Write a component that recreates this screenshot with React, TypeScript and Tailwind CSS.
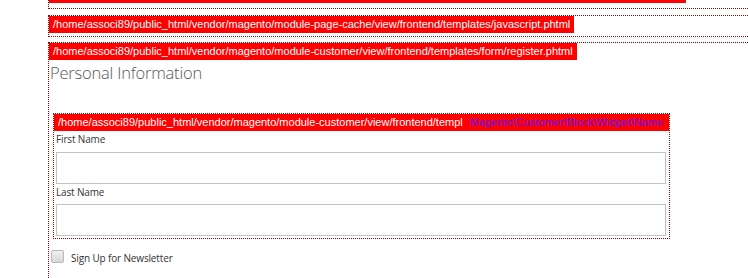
export default function App() {
  const hint = "absolute left-0 top-0 z-10 h-[17px] whitespace-nowrap bg-[#ff0000] px-[4px] text-[11px] leading-[17px] text-white [font-family:'Liberation_Sans',Arial,sans-serif]";
  return (
    <div className="h-[278px] w-[748px] overflow-hidden bg-white pl-[48px]">
      <div className="relative -mt-[15px] h-[24px] w-[720px] border border-dotted border-[#990000]">
        <div className={hint + " w-[637px] overflow-hidden"}>
          /home/associ89/public_html/vendor/magento/module-google-tag-manager/view/frontend/templates/html/google_tag_manager_default.phtml
        </div>
      </div>

      <div className="relative mt-[6px] h-[22px] w-[720px] border border-dotted border-[#990000]">
        <div className={hint}>
          /home/associ89/public_html/vendor/magento/module-page-cache/view/frontend/templates/javascript.phtml
        </div>
      </div>

      <div className="relative mt-[5px] h-[300px] w-[720px] border border-dotted border-[#990000] pt-[18px]">
        <div className={hint}>
          /home/associ89/public_html/vendor/magento/module-customer/view/frontend/templates/form/register.phtml
        </div>

        <div className="ml-[1px] h-[24px] text-[16.5px] font-light leading-[24px] tracking-[-0.2px] text-[#575757] [font-family:'Open_Sans',sans-serif]">
          Personal Information
        </div>

        <div className="relative ml-[4px] mt-[28px] w-[617px] border border-dotted border-[#990000] pb-[2px] pl-[2px] pr-[3px] pt-[18px] [font-family:'Open_Sans',sans-serif]">
          <div className="absolute left-0 top-0 z-10 flex h-[17px] w-full items-center overflow-hidden whitespace-nowrap bg-[#ff0000] pl-[4px] pr-[6px] text-[11px] leading-[17px] [font-family:'Liberation_Sans',Arial,sans-serif]">
            <span className="min-w-0 flex-1 overflow-hidden text-clip text-white">
              /home/associ89/public_html/vendor/magento/module-customer/view/frontend/templ
            </span>
            <span className="ml-[6px] text-[#6a10e8]">Magento\Customer\Block\Widget\Name</span>
          </div>

          <div className="h-[14px] text-[10px] leading-[14px] tracking-[-0.15px] text-[#333]">First Name</div>
          <div className="mt-[6px] h-[32px] w-[610px] border border-[#c2c2c2] bg-white" />
          <div className="mt-[1px] h-[14px] text-[10px] leading-[14px] tracking-[-0.15px] text-[#333]">Last Name</div>
          <div className="mt-[5px] h-[32px] w-[610px] border border-[#c2c2c2] bg-white" />
        </div>

        <div className="ml-[2px] mt-[7px] flex items-center [font-family:'Open_Sans',sans-serif]">
          <div className="h-[13px] w-[13px] rounded-[2px] border border-[#b8b8b8] bg-gradient-to-b from-[#f0f0f0] to-[#d8d8d8]" />
          <span className="ml-[7px] mt-[5px] text-[10px] tracking-[-0.15px] text-[#333]">Sign Up for Newsletter</span>
        </div>
      </div>
    </div>
  );
}
